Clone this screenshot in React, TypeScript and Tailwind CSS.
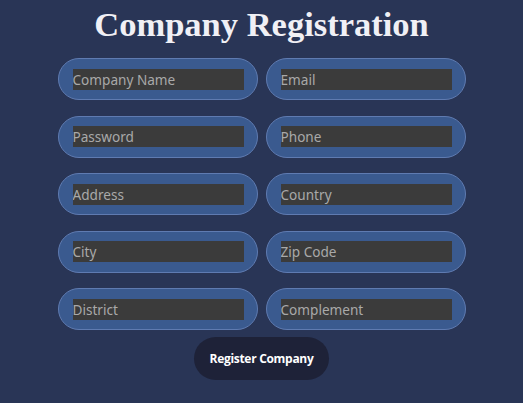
const fields = [
  "Company Name",
  "Email",
  "Password",
  "Phone",
  "Address",
  "Country",
  "City",
  "Zip Code",
  "District",
  "Complement",
];

export default function App() {
  return (
    <div className="min-h-screen bg-[#293556] flex flex-col items-center pt-[4px]">
      <h1 className="text-[34.5px] font-bold leading-[40px] text-[#f0f0f5] font-['Liberation_Serif',serif]">
        Company Registration
      </h1>
      <form
        className="mt-[14px] flex flex-col items-center"
        onSubmit={(e) => e.preventDefault()}
      >
        <div className="grid grid-cols-[200px_200px] gap-x-[8px] gap-y-[15.5px]">
          {fields.map((f) => (
            <div
              key={f}
              className="h-[42px] rounded-full bg-[#3a5a8f] border border-[#5f7bb1] flex items-center pl-[14px]"
            >
              <input
                placeholder={f}
                className="w-[171px] h-[21px] bg-[#3b3b3b] text-[13.6px] text-[#dddddd] placeholder:text-[#a9a9a9] outline-none px-0 font-['Noto_Sans',sans-serif]"
              />
            </div>
          ))}
        </div>
        <button
          type="submit"
          className="mt-[7px] w-[135px] h-[43px] rounded-full bg-[#1e2238] text-white text-[12px] font-bold font-['Open_Sans',sans-serif] tracking-[-0.3px]"
        >
          Register Company
        </button>
      </form>
    </div>
  );
}
